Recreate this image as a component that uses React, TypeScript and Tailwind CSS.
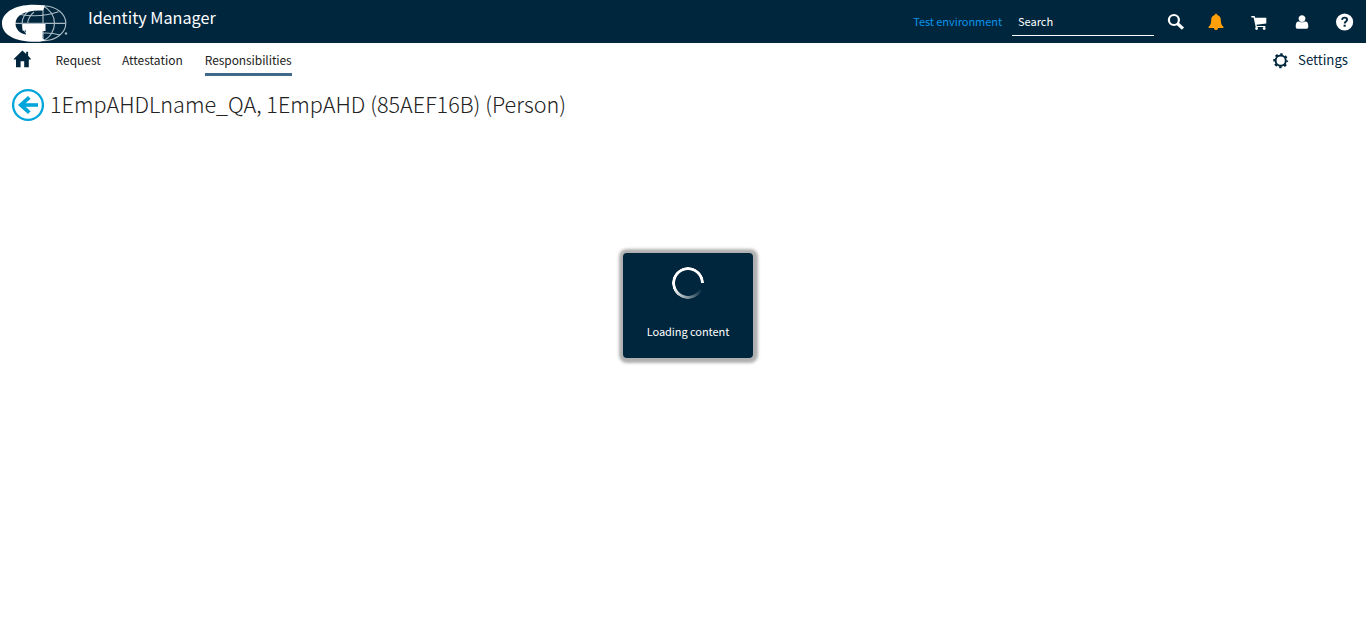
import React from "react";

function Logo() {
  return (
    <svg className="block h-[43px] w-[70px] shrink-0" viewBox="0 0 70 43">
      <g fill="none" stroke="#a9bac4" strokeWidth="1.150">
        <ellipse cx="44" cy="23.300" rx="21.800" ry="17.300" />
        <path d="M43 6V40M15 23.300H65.600M20 14.500Q40 18 58.500 11.800M38 33.500Q50 32 60 35" />
        <path d="M43 6C50 9 54.500 16 54.500 23.300S50 38 43 40.500M34 12Q28 17 27.500 24" />
      </g>
      <path
        fill="#fff"
        d="M45 5.600C17 2 2 12 2 23.500C2 35 16 42.500 38 41.800C41 41.700 43 41.200 45 40.500L42.500 38.500V31H45.500V24H22.500V30.500H26V34.500C20 33.500 15.500 29.500 15.500 23.500C15.500 14.500 27 9.500 43 10.600Z"
      />
      <circle cx="66" cy="33.500" r="1.200" fill="#a9bac4" />
    </svg>
  );
}

function SearchIcon() {
  return (
    <svg className="block size-[18px]" viewBox="0 0 18 18" fill="none" stroke="#fff">
      <circle cx="6.900" cy="7" r="5" strokeWidth="2.200" />
      <path d="M10.600 10.800L16 15.600" strokeWidth="3.200" />
    </svg>
  );
}

function BellIcon() {
  return (
    <svg className="block h-[18px] w-4" viewBox="0 0 16 18" fill="#ff9f0a">
      <path d="M8 .8C8.900 .8 9.300 1.400 9.300 2.100C11.600 2.800 12.700 4.500 12.800 6.700C12.900 10 13.400 12.300 15.400 13.700V14.900H.6V13.700C2.600 12.300 3.100 10 3.200 6.700C3.300 4.500 4.400 2.800 6.700 2.100C6.700 1.400 7.100 .8 8 .8ZM5.900 14.800H10.100C10 16.400 9.200 17.100 8 17.100S6 16.400 5.900 14.800Z" />
    </svg>
  );
}

function CartIcon() {
  return (
    <svg className="block h-4 w-4" viewBox="0 0 16 16" fill="#fff">
      <path d="M.3 1H3.600L4.100 2.700H15.300V8.400L5.500 9.700L5.800 10.900H14.300V12.100H4.700L2.600 2.500H.3Z" />
      <circle cx="5.600" cy="13.500" r="1.400" />
      <circle cx="13.200" cy="13.500" r="1.400" />
    </svg>
  );
}

function UserIcon() {
  return (
    <svg className="block h-4 w-4" viewBox="0 0 1792 1792" fill="#fff">
      <path d="M1600 1399q0 109-62.500 187t-150.500 78h-982q-88 0-150.500-78t-62.500-187q0-85 8.500-160.500t31.500-152 58.500-131 94-89 134.500-34.500h70q131 100 307 100t307-100h70q76 0 134.500 34.500t94 89 58.500 131 31.500 152 8.500 160.500zm-320-887q0 159-112.500 271.500t-271.500 112.500-271.500-112.500-112.500-271.500 112.500-271.500 271.500-112.500 271.500 112.500 112.500 271.500z" />
    </svg>
  );
}

function HelpIcon() {
  return (
    <svg className="block size-[18px]" viewBox="0 0 18 18">
      <circle cx="8.600" cy="9" r="8.600" fill="#fff" />
      <path d="M6.100 6.900C6.200 5.300 7.200 4.600 8.600 4.600C10.100 4.600 11.100 5.400 11.100 6.700C11.100 8.500 8.700 8.500 8.700 10.500" fill="none" stroke="#00263d" strokeWidth="1.900" />
      <path d="M7.600 11.700H9.700V13.700H7.600Z" fill="#00263d" />
    </svg>
  );
}

function GearIcon() {
  return (
    <svg className="block size-4" viewBox="0 0 16 16" fill="none" stroke="#00263d">
      <circle cx="7.700" cy="7.700" r="5.100" strokeWidth="2" />
      <circle cx="7.700" cy="7.700" r="6.500" strokeWidth="1.900" strokeDasharray="2.500 2.605" strokeDashoffset="1.250" />
    </svg>
  );
}

function HomeIcon() {
  return (
    <svg className="block size-[18px]" viewBox="-0.400 0 18 18" fill="#00263d">
      <path d="M9 .4L12.800 4V1.800H14.700V5.800L17.600 8.900V9.500H15.400V17.200H10.800V11.300H7.200V17.200H2.600V9.500H.3V8.900Z" />
    </svg>
  );
}

function BackIcon() {
  return (
    <svg className="block size-[34px] shrink-0" viewBox="0 0 34 34" fill="none" stroke="#00a6db">
      <circle cx="17" cy="17" r="14.900" strokeWidth="2.300" />
      <path d="M10 17H27" strokeWidth="3.600" />
      <path d="M18.300 9.300L9.800 17L18.300 24.700" strokeWidth="3.800" />
    </svg>
  );
}

export default function App() {
  return (
    <div className="relative flex h-[625px] w-full flex-col bg-white font-['Noto_Sans_CJK_SC','Noto_Sans_CJK_JP',sans-serif] text-[#222]">
      <header className="flex h-[43px] shrink-0 bg-[#00263d] text-white">
        <Logo />
        <h1 className="ml-[18px] mt-[5px] text-[16.200px] leading-[24px]">Identity Manager</h1>
        <div className="ml-auto flex">
          <span className="mt-[11px] mr-[10px] text-[11px] leading-[20px] tracking-[-0.050px] text-[#0a94ea]">Test environment</span>
          <div className="h-[36px] w-[142px] border-b border-white pl-[6px] pt-[11px] text-[11px] leading-[20px]">Search</div>
          <div className="ml-[13px] mt-[13px]"><SearchIcon /></div>
          <div className="ml-[23px] mt-[13px]"><BellIcon /></div>
          <div className="ml-[27px] mt-[15px]"><CartIcon /></div>
          <div className="ml-[27px] mt-[14px]"><UserIcon /></div>
          <div className="ml-[26px] mr-[12px] mt-[13px]"><HelpIcon /></div>
        </div>
      </header>
      <nav className="flex h-[40px] shrink-0 text-[12px] leading-[20px]">
        <div className="ml-[13px] mt-[7px]"><HomeIcon /></div>
        <a className="ml-[24.500px] mt-[7px]">Request</a>
        <a className="ml-[21px] mt-[7px]">Attestation</a>
        <a className="ml-[22px] mt-[7px] h-[26px] w-[87px] whitespace-nowrap border-b-3 border-[#41698a] tracking-[-0.090px]">Responsibilities</a>
        <div className="ml-auto mt-[10px]"><GearIcon /></div>
        <span className="ml-[9px] mr-[18px] mt-[7px] text-[13.200px] text-[#00263d]">Settings</span>
      </nav>
      <main className="flex items-start pl-[11px] pt-[5px]">
        <BackIcon />
        <h2 className="-mt-px ml-[5px] text-[21.600px] font-light leading-[34px]">1EmpAHDLname_QA, 1EmpAHD (85AEF16B) (Person)</h2>
      </main>
      <div className="absolute left-[623px] top-[253px] flex h-[104.500px] w-[130px] flex-col items-center rounded-[4px] bg-[#00263d] pt-[14px] text-white shadow-[0.500px_0.500px_3px_4px_#b0b0b0]">
        <div className="size-[32px] rounded-full bg-[conic-gradient(from_90deg,transparent_0deg,transparent_25deg,#ffffff80_90deg,#fff_160deg,#fff_360deg)] [mask-image:radial-gradient(circle,transparent_12.5px,#000_13.3px,#000_15.600px,transparent_16.300px)]" />
        <p className="mt-[22px] text-[11px] leading-[20px] tracking-[-0.050px]">Loading content</p>
      </div>
    </div>
  );
}
